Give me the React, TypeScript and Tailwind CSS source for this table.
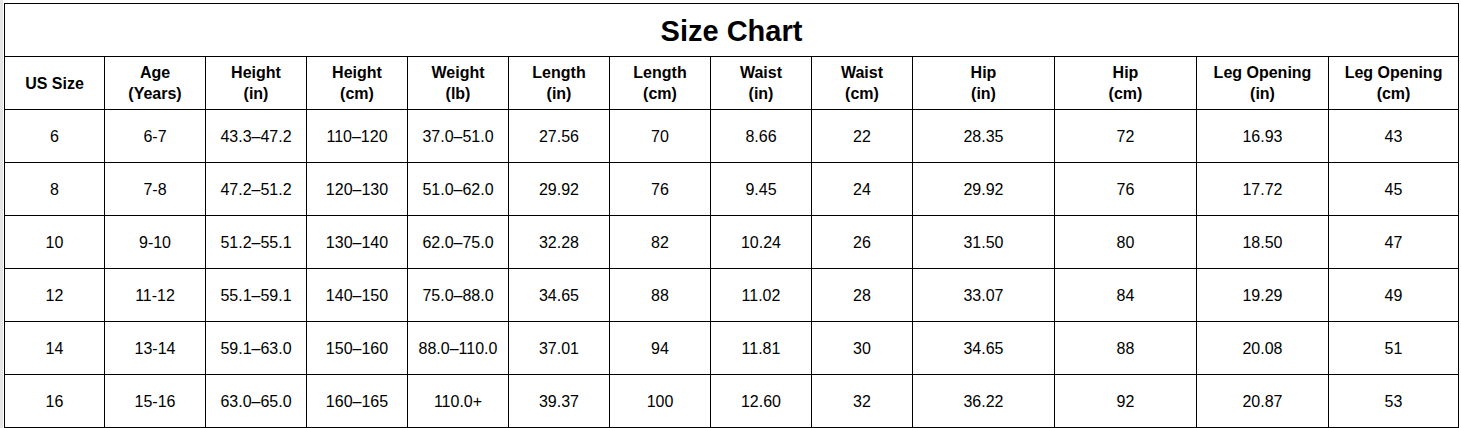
const headers = [
  ['US Size'],
  ['Age', '(Years)'],
  ['Height', '(in)'],
  ['Height', '(cm)'],
  ['Weight', '(lb)'],
  ['Length', '(in)'],
  ['Length', '(cm)'],
  ['Waist', '(in)'],
  ['Waist', '(cm)'],
  ['Hip', '(in)'],
  ['Hip', '(cm)'],
  ['Leg Opening', '(in)'],
  ['Leg Opening', '(cm)'],
]

const widths = [100, 101, 101, 101, 101, 101, 101, 101, 101, 142, 142, 132, 130]

const rows = [
  ['6', '6-7', '43.3–47.2', '110–120', '37.0–51.0', '27.56', '70', '8.66', '22', '28.35', '72', '16.93', '43'],
  ['8', '7-8', '47.2–51.2', '120–130', '51.0–62.0', '29.92', '76', '9.45', '24', '29.92', '76', '17.72', '45'],
  ['10', '9-10', '51.2–55.1', '130–140', '62.0–75.0', '32.28', '82', '10.24', '26', '31.50', '80', '18.50', '47'],
  ['12', '11-12', '55.1–59.1', '140–150', '75.0–88.0', '34.65', '88', '11.02', '28', '33.07', '84', '19.29', '49'],
  ['14', '13-14', '59.1–63.0', '150–160', '88.0–110.0', '37.01', '94', '11.81', '30', '34.65', '88', '20.08', '51'],
  ['16', '15-16', '63.0–65.0', '160–165', '110.0+', '39.37', '100', '12.60', '32', '36.22', '92', '20.87', '53'],
]

export default function App() {
  return (
    <div className="flex h-[428px] w-[1461px] overflow-hidden bg-white font-['Liberation_Sans',Arial,sans-serif] text-black">
      {/* spreadsheet gutter */}
      <div className="w-[3px] shrink-0 bg-[#e6e6e6]" />
      <div className="pl-px pt-[3px]">
        <table className="table-fixed border-collapse" style={{ width: 1455 }}>
          <colgroup>
            {widths.map((w, i) => (
              <col key={i} style={{ width: w }} />
            ))}
          </colgroup>
          <tbody>
            <tr className="h-[53px]">
              <td colSpan={13} className="border border-black p-0 pt-[2px] text-center align-middle text-[29px] font-bold leading-none">
                Size Chart
              </td>
            </tr>
            <tr className="h-[53px]">
              {headers.map((h, i) => (
                <td key={i} className="border border-black p-0 text-center align-middle text-[16px] font-bold leading-[21px]">
                  {h.map((line, j) => (
                    <div key={j}>{line}</div>
                  ))}
                </td>
              ))}
            </tr>
            {rows.map((r, i) => (
              <tr key={i} className="h-[53px]">
                {r.map((c, j) => (
                  <td key={j} className="border border-black p-0 pt-[2px] text-center align-middle text-[16px] leading-none">
                    {c}
                  </td>
                ))}
              </tr>
            ))}
          </tbody>
        </table>
      </div>
    </div>
  )
}
